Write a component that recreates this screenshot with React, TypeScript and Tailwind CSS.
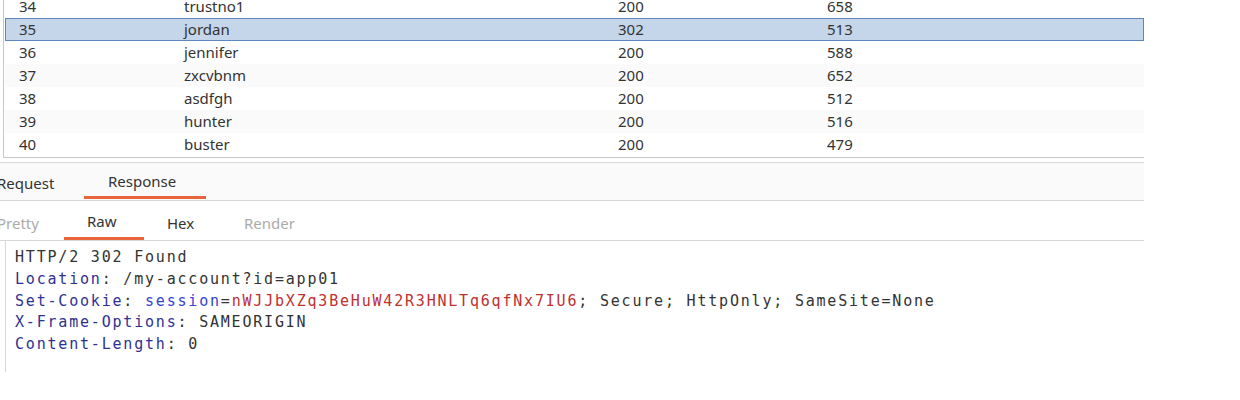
import React from "react";

const rows = [
  { n: 34, p: "trustno1", s: 200, l: 658 },
  { n: 35, p: "jordan", s: 302, l: 513 },
  { n: 36, p: "jennifer", s: 200, l: 588 },
  { n: 37, p: "zxcvbnm", s: 200, l: 652 },
  { n: 38, p: "asdfgh", s: 200, l: 512 },
  { n: 39, p: "hunter", s: 200, l: 516 },
  { n: 40, p: "buster", s: 200, l: 479 },
];

const sans = { fontFamily: '"Noto Sans", "DejaVu Sans", sans-serif' };

export default function App() {
  return (
    <div className="w-[1240px] h-[400px] bg-white overflow-hidden text-[#333]" style={sans}>
      {/* results table */}
      <div className="-mt-[5px] ml-[3px] w-[1141px] pb-[1px] border-l border-b border-[#c8c8c8] text-[15px]">
        {rows.map((r) => {
          const sel = r.n === 35;
          const alt = r.n % 2 === 1;
          return (
            <div
              key={r.n}
              className={
                "flex h-[23px] items-center ml-[1px] border " +
                (sel
                  ? "bg-[#c5d5ea] border-[#5b87bc]"
                  : alt
                  ? "bg-[#fafafa] border-transparent"
                  : "bg-white border-transparent")
              }
            >
              <div className="w-[178px] pl-[13px]">{r.n}</div>
              <div className="w-[434px]">{r.p}</div>
              <div className="w-[209px]">{r.s}</div>
              <div>{r.l}</div>
            </div>
          );
        })}
      </div>
      {/* request/response tabs */}
      <div className="mt-[4px] w-[1144px] h-[39px] bg-[#fafafa] border-t border-b border-[#d6d8d8] flex items-stretch text-[15px]">
        <div className="w-[87px] flex items-center -ml-[3px] pt-[3px] text-[#333]">Request</div>
        <div className="w-[122px] flex flex-col">
          <div className="flex-1 flex items-center pl-[24px] pt-[4px]">Response</div>
          <div className="h-[3px] bg-[#e8643a] mb-[1px]" />
        </div>
      </div>
      {/* raw tabs */}
      <div className="w-[1144px] h-[40px] bg-white border-b border-[#d6d8d8] flex items-stretch text-[15px]">
        <div className="w-[67px] flex items-center -ml-[3px] pt-[6px] text-[#ababab]">Pretty</div>
        <div className="w-[80px] flex flex-col">
          <div className="flex-1 flex items-center pl-[23px] pt-[5px]">Raw</div>
          <div className="h-[3px] bg-[#e8643a]" />
        </div>
        <div className="w-[100px] flex items-center pl-[23px] pt-[6px]">Hex</div>
        <div className="flex items-center pt-[6px] text-[#ababab]">Render</div>
      </div>
      {/* raw response */}
      <div
        className="ml-[5px] h-[131px] border-l border-[#d8d8d8] pl-[9px] pt-[6px] text-[15px] leading-[21.75px] tracking-[1.8px] text-[#333] whitespace-pre"
        style={{ fontFamily: '"DejaVu Sans Mono", monospace' }}
      >
        <div>HTTP/2 302 Found</div>
        <div>
          <span className="text-[#2e3192]">Location</span>: /my-account?id=app01
        </div>
        <div>
          <span className="text-[#2e3192]">Set-Cookie</span>:{" "}
          <span className="text-[#3443d4]">session</span>=
          <span className="text-[#c0302f]">nWJJbXZq3BeHuW42R3HNLTq6qfNx7IU6</span>; Secure; HttpOnly; SameSite=None
        </div>
        <div>
          <span className="text-[#2e3192]">X-Frame-Options</span>: SAMEORIGIN
        </div>
        <div>
          <span className="text-[#2e3192]">Content-Length</span>: 0
        </div>
      </div>
    </div>
  );
}
